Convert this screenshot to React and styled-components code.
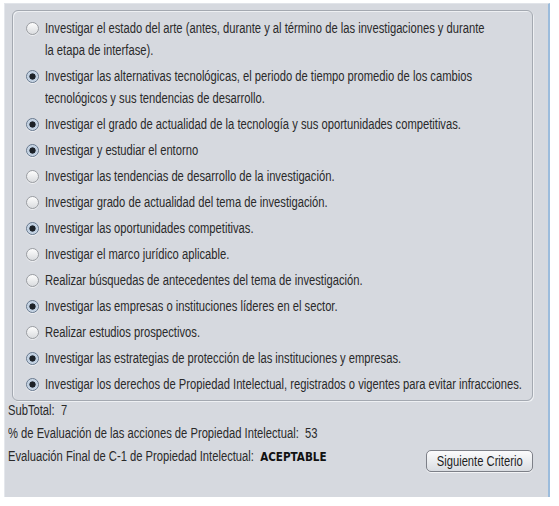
import React, { useState } from 'react';
import styled, { createGlobalStyle } from 'styled-components';

const GlobalStyle = createGlobalStyle`
  body {
    margin: 0;
    background: #ffffff;
    font-family: "Liberation Sans", Arial, sans-serif;
    overflow: hidden;
  }
`;

const Window = styled.div`
  width: 559px;
  height: 506px;
  padding: 3px 0 0 4px;
  box-sizing: border-box;
`;

const Frame = styled.div`
  width: 546px;
  height: 494px;
  box-sizing: border-box;
  background: #d6d9df;
  border-left: 1px solid #e4e7ec;
  border-top: 1px solid #e1e4e9;
  border-right: 2px solid #9cbcdc;
  padding: 6px 15px 0 3px;
  display: flex;
  flex-direction: column;
  overflow: hidden;
`;

const GroupBox = styled.div`
  margin-left: 4px;
  border: 1px solid #a4a9b1;
  box-shadow: inset 1px 1px 0 #eef0f3, 1px 1px 0 #eef0f3;
  border-radius: 6px;
  padding: 6px 8px 5px 8px;
  display: flex;
  flex-direction: column;
  gap: 4px;
`;

const Option = styled.label`
  display: flex;
  align-items: flex-start;
  gap: 2px;
  cursor: pointer;
`;

const RadioWrap = styled.span`
  flex: none;
  width: 22px;
  height: 22px;
  display: flex;
  align-items: center;
  justify-content: center;
`;

const Radio = styled.span`
  width: 13px;
  height: 13px;
  box-sizing: border-box;
  border-radius: 50%;
  border: 1px solid ${(p) => (p.$on ? '#66788e' : '#9a9da2')};
  background: ${(p) =>
    p.$on
      ? 'radial-gradient(circle at 50% 50%, #1c2127 0 2.8px, #b9cadd 3.4px, #e6edf5 100%)'
      : 'linear-gradient(#fdfdfd, #dadcdf)'};
  box-shadow: 0 1px 0 rgba(255, 255, 255, 0.6);
`;

const Narrow = styled.span`
  display: inline-block;
  white-space: nowrap;
  transform: scaleX(0.8);
  transform-origin: left center;
  color: #2a2a2a;
  font-size: 14px;
`;

const Label = styled(Narrow)`
  line-height: 22px;
`;

const Footer = styled.div`
  display: flex;
  justify-content: space-between;
  align-items: flex-start;
`;

const Summary = styled.div`
  display: flex;
  flex-direction: column;
  gap: 5px;
`;

const Line = styled(Narrow)`
  line-height: 18px;
`;

const Verdict = styled.b`
  font-family: "DejaVu Sans", "Liberation Sans", sans-serif;
  font-size: 13px;
  font-weight: bold;
  color: #111;
`;

const Button = styled.button`
  width: 107px;
  height: 22px;
  margin-top: 49px;
  font-family: "Liberation Sans", Arial, sans-serif;
  border: 1px solid #7d8088;
  border-radius: 5px;
  background: linear-gradient(#fbfbfc, #e9ebee 55%, #d9dce1);
  box-shadow: 0 1px 0 rgba(255, 255, 255, 0.7);
  padding: 0;
  cursor: pointer;
  display: flex;
  align-items: center;
  justify-content: center;
`;

const ButtonText = styled.span`
  display: inline-block;
  font-size: 14px;
  color: #1e1e1e;
  white-space: nowrap;
  transform: scaleX(0.8);
`;

const items = [
  { lines: ['Investigar el estado del arte (antes, durante y al término de las investigaciones y durante', 'la etapa de interfase).'], on: false },
  { lines: ['Investigar las alternativas tecnológicas, el periodo de tiempo promedio de los cambios', 'tecnológicos y sus tendencias de desarrollo.'], on: true },
  { lines: ['Investigar el grado de actualidad de la tecnología y sus oportunidades competitivas.'], on: true },
  { lines: ['Investigar y estudiar el entorno'], on: true },
  { lines: ['Investigar las tendencias de desarrollo de la investigación.'], on: false },
  { lines: ['Investigar grado de actualidad del tema de investigación.'], on: false },
  { lines: ['Investigar las oportunidades competitivas.'], on: true },
  { lines: ['Investigar el marco jurídico aplicable.'], on: false },
  { lines: ['Realizar búsquedas de antecedentes del tema de investigación.'], on: false },
  { lines: ['Investigar las empresas o instituciones líderes en el sector.'], on: true },
  { lines: ['Realizar estudios prospectivos.'], on: false },
  { lines: ['Investigar las estrategias de protección de las instituciones y empresas.'], on: true },
  { lines: ['Investigar los derechos de Propiedad Intelectual, registrados o vigentes para evitar infracciones.'], on: true },
];

function App() {
  const [checks, setChecks] = useState(items.map((i) => i.on));
  const subtotal = checks.filter(Boolean).length;

  const toggle = (idx) => {
    setChecks(checks.map((c, i) => (i === idx ? !c : c)));
  };

  return (
    <Window>
      <GlobalStyle />
      <Frame>
        <GroupBox>
          {items.map((item, idx) => (
            <Option key={idx} onClick={() => toggle(idx)}>
              <RadioWrap>
                <Radio $on={checks[idx]} />
              </RadioWrap>
              <Label>
                {item.lines.map((l, j) => (
                  <React.Fragment key={j}>
                    {j > 0 && <br />}
                    {l}
                  </React.Fragment>
                ))}
              </Label>
            </Option>
          ))}
        </GroupBox>
        <Footer>
          <Summary>
            <Line>SubTotal:&nbsp; {subtotal}</Line>
            <Line>% de Evaluación de las acciones de Propiedad Intelectual:&nbsp; 53</Line>
            <Line>
              Evaluación Final de C-1 de Propiedad Intelectual:&nbsp; <Verdict>ACEPTABLE</Verdict>
            </Line>
          </Summary>
          <Button>
            <ButtonText>Siguiente Criterio</ButtonText>
          </Button>
        </Footer>
      </Frame>
    </Window>
  );
}

export default App;
